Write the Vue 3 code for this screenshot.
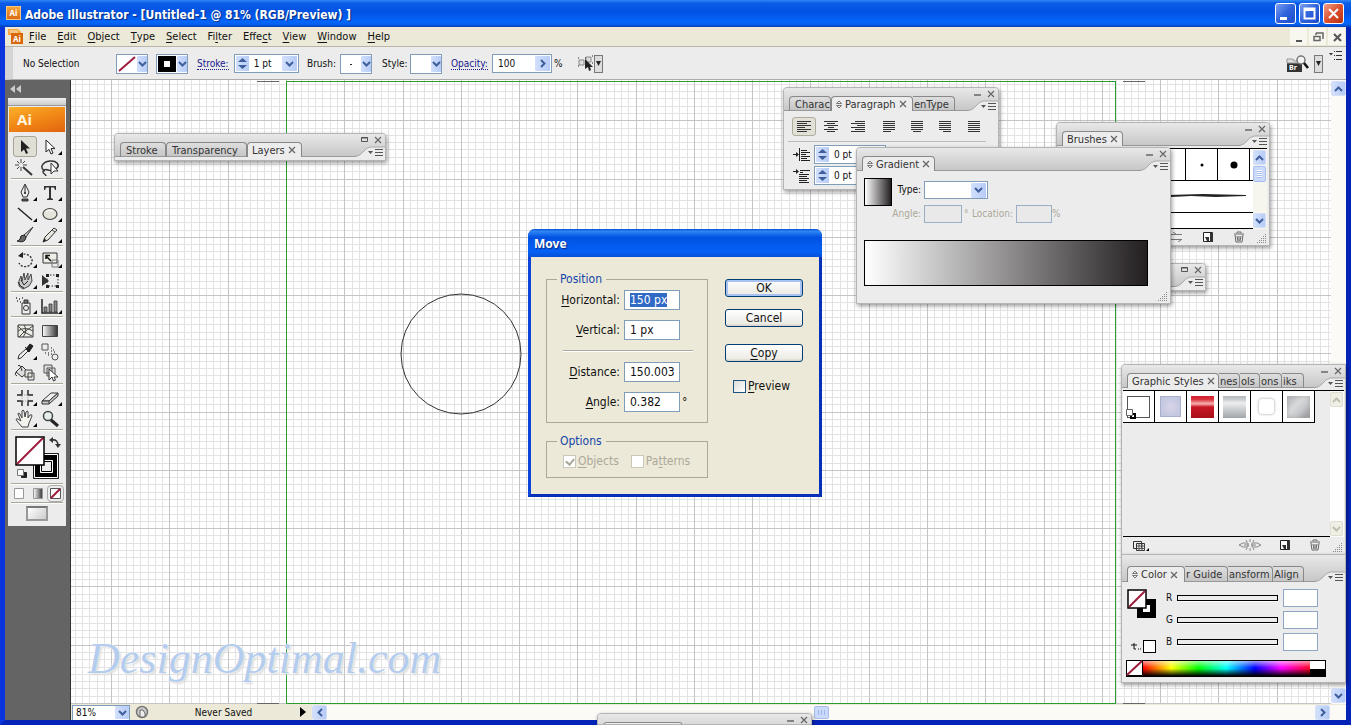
<script setup>
import { ref, onMounted } from 'vue'

const menus = [
  ['', 'F', 'ile'], ['', 'E', 'dit'], ['', 'O', 'bject'], ['', 'T', 'ype'], ['', 'S', 'elect'],
  ['Fi', 'l', 'ter'], ['Effe', 'c', 't'], ['', 'V', 'iew'], ['', 'W', 'indow'], ['', 'H', 'elp']
]

const arrow = 'M8 3v12l3-2.6 2 4.6 2-1-2-4.4h4z'
const toolGroups = [
  [
    { name: 'Selection', active: true, svg: `<path d="${arrow}" fill="#222"/>` },
    { name: 'Direct Selection', sub: true, svg: `<path d="${arrow}" fill="#fff" stroke="#222"/>` },
    { name: 'Magic Wand', svg: '<path d="M10 9l9 8" stroke="#333" stroke-width="2"/><path d="M8 1v4M8 9v4M2 7h4M10 7h4M4 3l2.500 2.500M12 3L9.500 5.500M4 11l2.500-2.500" stroke="#444"/>' },
    { name: 'Lasso', svg: '<path d="M7 13C1 10 4 4 12 3c7-.500 10 4 7 7-2 2-6 3-9 2-3-1-5 0-5 2s3 2 3 4" fill="none" stroke="#333" stroke-width="1.500"/><path d="M13 5v11l3-3h4z" fill="#fff" stroke="#333"/>' }
  ],
  [
    { name: 'Pen', sub: true, svg: '<path d="M12 1l4 8-2 5h-4L8 9z" fill="#eee" stroke="#333"/><path d="M12 2v8M9 16h6v2H9z" stroke="#333" fill="#555"/><circle cx="12" cy="10" r="1" fill="#222"/>' },
    { name: 'Type', sub: true, svg: '<path d="M6 3h12v4h-1l-1-2.500h-3V15l2 1v1H9v-1l2-1V4.500H8L7 7H6z" fill="#333"/>' },
    { name: 'Line Segment', sub: true, svg: '<path d="M5 4l14 12" stroke="#222" stroke-width="1.500"/>' },
    { name: 'Ellipse', sub: true, svg: '<ellipse cx="12" cy="10" rx="7" ry="5.500" fill="#e4e4da" stroke="#444" stroke-width="1.200"/><path d="M8 8q3-3 7-1" stroke="#fff" fill="none"/>' },
    { name: 'Paintbrush', svg: '<path d="M20 2l-9 8 2 2z" fill="#ccc" stroke="#333"/><path d="M11 10q-4 0-4 4-1 2-3 2 6 2 8-1 1-2 1-3z" fill="#666" stroke="#222"/>' },
    { name: 'Pencil', sub: true, svg: '<path d="M5 17l2-5 9-9 3 2-9 10z" fill="#e8e8e0" stroke="#333"/><path d="M5 17l1.500-3.500 2 1.800z" fill="#222"/><path d="M14 5l3 2" stroke="#444"/>' }
  ],
  [
    { name: 'Rotate', sub: true, svg: '<path d="M7 5c7-3 13 2 12 7-2 6-11 6-13 1" fill="none" stroke="#333" stroke-width="1.400" stroke-dasharray="2 1.500"/><path d="M5 6l5-4v6z" fill="#222"/>' },
    { name: 'Scale', sub: true, svg: '<path d="M5 3h14v10H5z" fill="#eeeee6" stroke="#333"/><path d="M14 10h6v7h-6z" fill="none" stroke="#777"/><path d="M8 6l5 5M8 9V5.500h4" stroke="#111" stroke-width="1.500" fill="none"/>' },
    { name: 'Warp', sub: true, svg: '<path d="M6 10l2-5 1 5 2-8 1 7 3-7v7l3-6 1 7-3 5-6 3-4-3z" fill="#ccc" stroke="#444"/><path d="M5 11q2 5 6 6M8 9l3 5 4-4" fill="none" stroke="#222"/>' },
    { name: 'Free Transform', svg: '<path d="M9 4h11v11H9z" fill="none" stroke="#333" stroke-dasharray="1.500 1.500"/><path d="M8 3h3v3H8zM18 3h3v3h-3zM8 14h3v3H8zM18 14h3v3h-3z" fill="#222"/><path d="M4 4v11l7-5z" fill="#333"/>' }
  ],
  [
    { name: 'Symbol Sprayer', sub: true, svg: '<path d="M9 7h8v11H9z" fill="#eee" stroke="#333"/><path d="M11 4h4v3h-4z" fill="#777" stroke="#333"/><circle cx="13" cy="12" r="2.500" fill="none" stroke="#333"/><path d="M3 2h1M6 3h1M9 2h1M4 5h1M7 6h1" stroke="#333" stroke-width="1.500"/>' },
    { name: 'Column Graph', sub: true, svg: '<path d="M4 3v14h16" fill="none" stroke="#222" stroke-width="1.500"/><path d="M6 11h3v5H6zM11 8h3v8h-3zM16 5h3v11h-3z" fill="#888" stroke="#333" stroke-width=".800"/>' }
  ],
  [
    { name: 'Mesh', svg: '<path d="M5 4h15v12H5z" fill="#eeeee6" stroke="#333"/><path d="M5 10q7-5 15 0M11 4q4 6-1 12M5 5l6 6 9-6M6 16l5-5 8 4" fill="none" stroke="#444"/>' },
    { name: 'Gradient', svg: '<defs><linearGradient id="toolramp"><stop stop-color="#fff"/><stop offset="1" stop-color="#333"/></linearGradient></defs><path d="M4.500 4.500h15v11h-15z" fill="url(#toolramp)" stroke="#444"/>' },
    { name: 'Eyedropper', sub: true, svg: '<path d="M5 17l1-4 7-6 2 2-7 7z" fill="#eee" stroke="#333"/><path d="M12 5l5 5M13 7l4-5 3 2-4 6z" fill="#222" stroke="#222"/>' },
    { name: 'Blend', svg: '<path d="M4 2h6v6H4z" fill="#eee" stroke="#555"/><circle cx="17" cy="15" r="3" fill="#eee" stroke="#555"/><path d="M7 11h1M10 11h1M13 6h1M13 9h1M15 8h1M10 13h1M13 12h1M16 10h1" stroke="#555" stroke-width="1.300"/>' },
    { name: 'Live Paint Bucket', svg: '<path d="M3 9l6-6 6 6-6 5z" fill="#ddd" stroke="#333"/><path d="M5 3q2-3 4 5M3 9q-2 3 1 4" fill="none" stroke="#333"/><path d="M12 7h7v7h-7zM15 10h6v7h-6z" fill="#e4e4dc" stroke="#444"/>' },
    { name: 'Live Paint Selection', svg: '<path d="M6 2h8v8H6zM9 5h8v8H9z" fill="#ddd" stroke="#555"/><path d="M11 6v11l3-3 1.500 4 2-1-1.500-3h4z" fill="#fff" stroke="#333"/>' }
  ],
  [
    { name: 'Crop Area', sub: true, svg: '<path d="M9 2v5H4M15 2v5h5M9 18v-5H4M15 18v-5h5" fill="none" stroke="#222" stroke-width="1.400"/><path d="M9 7h6v6H9z" fill="none" stroke="#999" stroke-dasharray="1 1"/>' },
    { name: 'Eraser', sub: true, svg: '<path d="M4 13l9-8h7l-9 8z" fill="#eee" stroke="#333"/><path d="M4 13v3h7l9-8V5l-9 8H4M11 13v3" fill="#ccc" stroke="#333"/>' },
    { name: 'Hand', sub: true, svg: '<path d="M9 18l-5-6q-2-3 1-2l3 2L5 5q0-2 2 0l2 4V2q1-2 2 0l1 6 1-5q2-2 2 0v6l2-3q2-1 2 1l-3 7-1 4z" fill="#f4f4ee" stroke="#444"/>' },
    { name: 'Zoom', svg: '<circle cx="10" cy="7" r="4.500" fill="#e8eef0" stroke="#444" stroke-width="1.500"/><path d="M13 11l7 6" stroke="#222" stroke-width="3"/>' }
  ]
]

const panels = [
  { id: 'layers', min: 'box', tabs: [{ t: 'Stroke', w: 46 }, { t: 'Transparency', w: 81 }, { t: 'Layers', w: 55, on: true }] },
  { id: 'paragraph', min: 'dash', tabs: [{ t: 'Charac', w: 42 }, { t: 'Paragraph', w: 82, on: true, cycle: true }, { t: 'enType', w: 42, cut: true }] },
  { id: 'brushes', min: 'dash', tabs: [{ t: 'Brushes', w: 61, on: true }] },
  { id: 'spare', min: 'box', tabs: [] },
  { id: 'gradient', min: 'dash', tabs: [{ t: 'Gradient', w: 73, on: true, cycle: true }] },
  { id: 'styles', min: 'dash', tabs: [{ t: 'Graphic Styles', w: 92, on: true }, { t: 'nes', w: 21, cut: true }, { t: 'ols', w: 20, cut: true }, { t: 'ons', w: 22, cut: true }, { t: 'iks', w: 22, cut: true }] },
  { id: 'color', min: '', tabs: [{ t: 'Color', w: 58, on: true, cycle: true }, { t: 'r Guide', w: 43, cut: true }, { t: 'ansform', w: 45, cut: true }, { t: 'Align', w: 31, cut: true }] },
  { id: 'docked', min: 'dash', tabs: [{ t: '', w: 80, on: true, blank: true }] }
]

const alignIcons = [
  ['left', [14, 10, 14, 8, 14, 10], 0], ['center', [14, 8, 14, 6, 14, 8], 1], ['right', [10, 14, 8, 14, 10, 14], 2],
  ['justify left', [12, 12, 12, 12, 12, 8], 0], ['justify center', [12, 12, 12, 12, 12, 8], 1],
  ['justify right', [12, 12, 12, 12, 12, 8], 2], ['justify all', [12, 12, 12, 12, 12, 12], 0]
].map(([name, ws, mode]) => ({
  name,
  d: ws.map((w, i) => `M${mode === 0 ? 1 : mode === 1 ? 1 + (14 - w) / 2 : 15 - w} ${i * 2 + 2}.5h${w}`).join('')
}))

const sliders = ['R', 'G', 'B']
const swatches = ['default', 'lilac', 'red', 'steel', 'soft', 'bevel']

function gridPath(origin, limit, step, vertical, len) {
  let d = ''
  const start = origin - Math.ceil(origin / step) * step
  for (let p = start; p < limit; p += step) {
    const at = Math.round(p) + 0.5
    d += vertical ? `M${at} 0V${len}` : `M0 ${at}H${len}`
  }
  return d
}
const major = 58.27
const minor = major / 8
const gridMinor = gridPath(215, 2400, minor, true, 1500) + gridPath(623, 1500, minor, false, 2400)
const gridMajor = gridPath(215, 2400, major, true, 1500) + gridPath(623, 1500, major, false, 2400)

const horizontal = ref('150 px')
const firstField = ref(null)
onMounted(() => {
  firstField.value.focus({ preventScroll: true })
  firstField.value.select()
})
</script>

<template>
  <div class="window">
    <header class="titlebar">
      <span class="app-icon">Ai</span>
      <h1>Adobe Illustrator - [Untitled-1 @ 81% (RGB/Preview) ]</h1>
      <button class="win-btn" aria-label="Minimize"><svg width="19" height="19"><path d="M4 13h7v3H4z" fill="#fff" /></svg></button>
      <button class="win-btn" aria-label="Maximize"><svg width="19" height="19"><path d="M4.500 4.500h10v10h-10zM4 6h11" fill="none" stroke="#fff" stroke-width="2" /></svg></button>
      <button class="win-btn close" aria-label="Close"><svg width="19" height="19"><path d="M5 5l9 9M14 5l-9 9" stroke="#fff" stroke-width="2" /></svg></button>
    </header>

    <nav class="menubar">
      <svg class="doc-icon" width="16" height="17"><path d="M0 1h10l3 3v12H3V7H0z" fill="#f6a53c" /><path d="M3 5h12v11H3z" fill="#d9670c" /><path d="M1 2h9v3H2z" fill="#f8c684" /><text x="5" y="14" fill="#fff" font-size="8" font-weight="bold" font-family="Noto Sans, sans-serif">Ai</text></svg>
      <button v-for="m in menus" :key="m.join('')" class="menu">{{ m[0] }}<u>{{ m[1] }}</u>{{ m[2] }}</button>
      <span class="grow"></span>
      <button class="doc-btn" aria-label="Minimize document"><svg width="16" height="16"><path d="M5 11h6v2H5z" fill="#555" /></svg></button>
      <button class="doc-btn" aria-label="Restore document"><svg width="16" height="16"><path d="M6 4h7v6M6 4v2M4 7.500h6v4H4z" fill="none" stroke="#666" stroke-width="1.500" /></svg></button>
      <button class="doc-btn" aria-label="Close document"><svg width="16" height="16"><path d="M5 5l7 7M12 5l-7 7" stroke="#555" stroke-width="2" /></svg></button>
    </nav>

    <div class="controlbar">
      <span class="lab-sel">No Selection</span>
      <button class="swatch" aria-label="Fill"><svg class="chip" width="20" height="18"><path d="M2 16L18 2" stroke="#9c1c3c" stroke-width="2" /></svg><span class="drop"><svg width="9" height="8"><path d="M1 2l3.500 3.500L8 2" /></svg></span></button>
      <button class="swatch" aria-label="Stroke colour"><svg class="chip" width="20" height="18"><path d="M1 1h18v16H1z" fill="#000" /><path d="M7 6h6v6H7z" fill="#fff" /></svg><span class="drop"><svg width="9" height="8"><path d="M1 2l3.500 3.500L8 2" /></svg></span></button>
      <label class="lab-stroke" for="weight"><a href="#stroke">Stroke:</a></label>
      <span class="combo weight">
        <button class="spin" aria-label="Step stroke"><svg width="9" height="13"><path d="M0 5l4.500-4L9 5zM0 8l4.500 4L9 8z" /></svg></button>
        <select id="weight"><option>1 pt</option></select>
        <span class="drop"><svg width="9" height="8"><path d="M1 2l3.500 3.500L8 2" /></svg></span>
      </span>
      <span class="lab-brush">Brush:</span>
      <button class="swatch" aria-label="Brush"><svg class="chip" width="20" height="18"><path d="M9 9h2v1H9z" fill="#222" /></svg><span class="drop"><svg width="9" height="8"><path d="M1 2l3.500 3.500L8 2" /></svg></span></button>
      <span class="lab-style">Style:</span>
      <button class="swatch" aria-label="Style"><svg class="chip" width="20" height="18"></svg><span class="drop"><svg width="9" height="8"><path d="M1 2l3.500 3.500L8 2" /></svg></span></button>
      <label class="lab-opacity" for="opacity"><a href="#opacity">Opacity:</a></label>
      <span class="combo opacity">
        <input id="opacity" value="100" />
        <button class="drop" aria-label="Opacity slider"><svg width="8" height="9"><path d="M2 1l3.500 3.500L2 8" /></svg></button>
      </span>
      <span class="lab-pct">%</span>
      <button class="bare" aria-label="Select similar"><svg width="16" height="17"><path d="M1 5h5v5H1zM8 2h5v5H8z" fill="#ddd" stroke="#888" /><path d="M0 3h1M7 3h1M14 1h1M0 11h1M14 8h1" stroke="#222" /><path d="M7 4v10l3-2 1 4 2-1-1-3h3z" fill="#222" /></svg></button>
      <button class="tiny-drop" aria-label="Similar options"><svg width="5" height="5"><path d="M0 0h5L2.500 5z" fill="#222" /></svg></button>
      <span class="grow"></span>
      <button class="bare" aria-label="Go to Bridge"><svg width="24" height="18"><path d="M1 4h6l1 2h8v11H1z" fill="#333" /><path d="M1 4h6l1 2h8v2H1z" fill="#ddd" stroke="#999" /><text x="3" y="15" fill="#fff" font-size="7" font-weight="bold" font-family="Noto Sans, sans-serif">Br</text><circle cx="15" cy="5" r="4" fill="#f4f4f4" stroke="#777" stroke-width="1.500" /><path d="M18 8l4 5" stroke="#111" stroke-width="2.500" /></svg></button>
      <button class="tiny-drop" aria-label="Bridge options"><svg width="5" height="5"><path d="M0 0h5L2.500 5z" fill="#222" /></svg></button>
      <button class="bare bar-menu" aria-label="Bar menu"><svg width="14" height="10"><path d="M0 3h4L2 5.500z" fill="#333" /><path d="M5 1.500h1M7 1.500h6M5 5.500h1M7 5.500h6M5 9.500h1M7 9.500h6" stroke="#333" /></svg></button>
    </div>

    <main class="workspace">
      <aside class="dock">
        <button class="collapse" aria-label="Collapse tools"><svg width="11" height="8"><path d="M5 0v8L0 4zM11 0v8L6 4z" fill="#ccc" /></svg></button>
        <div class="tools">
          <div class="handle"></div>
          <div class="logo">Ai</div>
          <div v-for="(g, gi) in toolGroups" :key="gi" class="tool-group">
            <button v-for="t in g" :key="t.name" class="tool" :class="{ active: t.active, sub: t.sub }" :aria-label="t.name">
              <svg width="24" height="20" v-html="t.svg"></svg>
            </button>
          </div>
          <div class="paint">
            <svg width="46" height="46">
              <path d="M18.500 19.500h25v25h-25z" fill="#000" stroke="#222" /><path d="M19.500 20.500h23v23h-23z" fill="none" stroke="#fff" />
              <path d="M25.500 26.500h12v12h-12z" fill="#ececec" stroke="#fff" /><path d="M26.500 27.500h10v10h-10z" fill="#ececec" stroke="#000" />
              <path d="M1 3h28v28H1z" fill="#fff" stroke="#000" stroke-width="1.500" /><path d="M2 30L28 4" stroke="#9c1c3c" stroke-width="2" />
              <path d="M37 6q6-1 6 6" fill="none" stroke="#333" stroke-width="1.500" /><path d="M34 6l4-3v6zM40 10h6l-3 4z" fill="#333" />
              <path d="M6.500 38.500h5v5h-5z" fill="#222" stroke="#222" /><path d="M2.500 35.500h6v6h-6z" fill="#fff" stroke="#777" />
            </svg>
          </div>
          <div class="modes">
            <button aria-label="Color"><svg width="15" height="13"><path d="M2.500 1.500h9v10h-9z" fill="#fff" stroke="#999" /></svg></button>
            <button aria-label="Gradient fill"><svg width="15" height="13"><path d="M3.500 1.500h9v10h-9z" fill="url(#toolramp)" stroke="#999" /></svg></button>
            <button class="active" aria-label="None"><svg width="15" height="13"><path d="M2.500 1.500h10v10h-10z" fill="#fff" stroke="#555" /><path d="M3 11l9-9" stroke="#9c1c3c" stroke-width="2" /></svg></button>
          </div>
          <div class="screen"><button aria-label="Screen mode"></button></div>
        </div>
      </aside>

      <section class="document">
        <div class="canvas-row">
          <div class="canvas">
            <svg class="art" width="100%" height="100%">
              <path :d="gridMinor" stroke="#e3e3e3" shape-rendering="crispEdges" />
              <path :d="gridMajor" stroke="#c4c4c4" shape-rendering="crispEdges" />
              <rect x="215" y="1" width="830" height="1" fill="#2a9c30" />
              <rect x="215" y="623" width="830" height="1" fill="#2a9c30" />
              <rect x="215" y="1" width="1" height="623" fill="#2a9c30" />
              <rect x="1044" y="1" width="1" height="623" fill="#2a9c30" />
              <path d="M186 1.500h22M1052 1.500h22M186 623.500h22M1052 623.500h22" stroke="#666" />
              <circle cx="390" cy="274" r="60" fill="none" stroke="#333" />
            </svg>
            <div class="watermark">DesignOptimal.com</div>
          </div>
          <div class="vscroll">
            <button class="sb" aria-label="Scroll up"><svg width="9" height="8"><path d="M1 6l3.500-3.500L8 6" /></svg></button>
            <span class="grow"></span>
            <button class="sb" aria-label="Scroll down"><svg width="9" height="8"><path d="M1 2l3.500 3.500L8 2" /></svg></button>
          </div>
        </div>
        <footer class="status">
          <span class="zoom"><select aria-label="Zoom level"><option>81%</option></select><span class="drop"><svg width="9" height="8"><path d="M1 2l3.500 3.500L8 2" /></svg></span></span>
          <svg class="cue" width="14" height="14"><circle cx="7" cy="7" r="5.500" fill="#ccc" stroke="#777" stroke-width="1.500" /><path d="M5 12V5h3l2 3v4z" fill="#eee" stroke="#666" /></svg>
          <span class="saved">Never Saved</span>
          <button class="bare play" aria-label="Status menu"><svg width="6" height="10"><path d="M0 0v10l6-5z" fill="#000" /></svg></button>
          <div class="hscroll">
            <button class="sb" aria-label="Scroll left"><svg width="8" height="9"><path d="M6 1L2.500 4.500 6 8" /></svg></button>
            <span class="grow"></span>
            <span class="thumb"></span>
            <span class="grow"></span>
            <button class="sb" aria-label="Scroll right"><svg width="8" height="9"><path d="M2 1l3.500 3.500L2 8" /></svg></button>
          </div>
        </footer>
      </section>
    </main>

    <section v-for="p in panels" :key="p.id" class="panel" :class="p.id">
      <div class="head">
        <div class="tabs">
          <button v-for="(t, i) in p.tabs" :key="i" class="tab" :class="{ on: t.on, cut: t.cut }" :style="{ width: t.w + 'px' }">
            <svg v-if="t.cycle" width="6" height="9"><path d="M.500 3.500L3 1l2.500 2.500zM.500 5.500L3 8l2.500-2.500z" fill="none" stroke="#777" /></svg>
            <span>{{ t.t }}</span>
            <svg v-if="t.on && !t.blank" width="8" height="8"><path d="M1 1l6 6M7 1L1 7" stroke="#666" stroke-width="1.300" /></svg>
          </button>
        </div>
        <div class="corner">
          <div v-if="p.min" class="btns">
            <svg width="8" height="8"><path v-if="p.min === 'dash'" d="M0 5h7" stroke="#666" stroke-width="1.500" /><path v-else d="M.500 1.500h6v4h-6zM0 2h7" fill="none" stroke="#555" /></svg>
            <svg width="8" height="8"><path d="M1 1l6 6M7 1L1 7" stroke="#666" stroke-width="1.200" /></svg>
          </div>
          <svg class="flyout" width="30" height="12"><path d="M0 12Q5 11 8 7t7-5h15v10z" fill="#ececec" /><path d="M0 11.500Q5 11 8 7t7-5h15" fill="none" stroke="#aaa" /><path d="M13 6h5l-2.500 3z" fill="#555" /><path d="M20 4.500h8M20 7.500h8M20 10.500h8" stroke="#555" /></svg>
        </div>
      </div>

      <div v-if="p.id === 'paragraph'" class="body">
        <div class="aligns">
          <button v-for="(a, i) in alignIcons" :key="a.name" :class="{ active: i === 0 }" :aria-label="a.name"><svg width="16" height="15"><path :d="a.d" stroke="#333" /></svg></button>
        </div>
        <div v-for="n in 2" :key="n" class="indent">
          <svg width="18" height="14"><path v-if="n === 1" d="M0 6.500h5M6.500 0v13M8 2.500h6M8 4.500h9M8 6.500h5M8 8.500h9M8 10.500h6M8 12.500h9" stroke="#222" /><path v-else d="M0 2.500h5M7 1.500h10M7 3.500h3M6 5.500h10M6 7.500h8M6 9.500h10M6 11.500h8M6 13.500h10" stroke="#222" /><path :d="n === 1 ? 'M3 4l3 2.500L3 9z' : 'M3 0l3 2.500L3 5z'" fill="#222" /></svg>
          <span class="combo">
            <button class="spin" aria-label="Step"><svg width="9" height="13"><path d="M0 5l4.500-4L9 5zM0 8l4.500 4L9 8z" /></svg></button>
            <input :aria-label="n === 1 ? 'Left indent' : 'First-line indent'" value="0 pt" />
          </span>
        </div>
      </div>

      <div v-else-if="p.id === 'brushes'" class="body">
        <div class="brush-area">
          <div class="brush-list">
            <div class="dots">
              <span v-for="n in 6" :key="n"><svg width="31" height="31"><circle v-if="n > 4" cx="16" cy="16" :r="n === 5 ? 1.5 : 3.500" fill="#000" /></svg></span>
            </div>
            <div class="charcoal"><svg width="192" height="31"><path d="M20 14l40-1 50 1 35-1 43 1v1l-30 1-25-1-40 2-50-1z" fill="#222" /></svg></div>
            <div class="next"></div>
          </div>
          <div class="mini-scroll">
            <button class="sb" aria-label="Up"><svg width="9" height="8"><path d="M1 6l3.500-3.500L8 6" /></svg></button>
            <span class="thumb"></span>
            <span class="grow"></span>
            <button class="sb" aria-label="Down"><svg width="9" height="8"><path d="M1 2l3.500 3.500L8 2" /></svg></button>
          </div>
        </div>
        <div class="foot">
          <svg width="13" height="10"><path d="M0 2.500h12M0 7.500h12M3 0l3 2M8 10l3-2" stroke="#777" /></svg>
          <svg width="12" height="12"><path d="M1.500 1.500h9v9h-9z" fill="#fff" stroke="#222" /><path d="M3 6h4v4H5zM8 2h3v9H8z" fill="#333" /></svg>
          <svg width="12" height="12"><path d="M1 3h10M4 2V1h4v1M2 4l1 7h6l1-7M4 5l1 5M6 5v5M8 5l-1 5" fill="none" stroke="#666" /></svg>
        </div>
      </div>

      <div v-else-if="p.id === 'gradient'" class="body">
        <div class="grad-top">
          <div class="grad-thumb"></div>
          <div class="grad-fields">
            <div class="line"><label for="gtype" class="on">Type:</label><span class="combo gsel"><select id="gtype"><option></option></select><span class="drop"><svg width="9" height="8"><path d="M1 2l3.500 3.500L8 2" /></svg></span></span></div>
            <div class="line"><label for="gangle">Angle:</label><input id="gangle" class="gangle" disabled /><span class="deg">°</span><label for="gloc" class="loc">Location:</label><input id="gloc" class="gloc" disabled /><span>%</span></div>
          </div>
        </div>
        <div class="grad-bar"></div>
      </div>

      <div v-else-if="p.id === 'styles'" class="body">
        <div class="style-area">
          <div class="style-list">
            <button v-for="s in swatches" :key="s" :aria-label="s + ' style'"><span :class="s"></span><svg v-if="s === 'default'" width="10" height="10"><path d="M5 5h4v4H5z" fill="#fff" stroke="#000" stroke-width="2" /><path d="M.500.500h6v6h-6z" fill="#fff" stroke="#666" /></svg></button>
          </div>
          <div class="mini-scroll off">
            <button class="sb" aria-label="Up"><svg width="9" height="8"><path d="M1 6l3.500-3.500L8 6" /></svg></button>
            <span class="grow"></span>
            <button class="sb" aria-label="Down"><svg width="9" height="8"><path d="M1 2l3.500 3.500L8 2" /></svg></button>
          </div>
        </div>
        <div class="foot">
          <svg width="18" height="13"><path d="M1.500 2.500h8v7h-8zM4.500 4.500h8v7h-8z" fill="#eee" stroke="#333" /><path d="M5 7h8M5 9.500h8M7 5v7M10 5v7" stroke="#555" /><path d="M17 9v3h-3z" fill="#000" /></svg>
          <span class="grow"></span>
          <svg width="22" height="12"><path d="M0 6l4-2h5v4H4zM22 6l-4-2h-5v4h5zM5 6h5M12 6h5M11 0v3M11 9v3M7 1l1 2M15 1l-1 2M7 11l1-2M15 11l-1-2" fill="none" stroke="#888" /></svg>
          <svg class="new" width="12" height="12"><path d="M1.500 1.500h9v9h-9z" fill="#fff" stroke="#222" /><path d="M3 6h4v4H5zM8 2h3v9H8z" fill="#333" /></svg>
          <svg width="12" height="12"><path d="M1 3h10M4 2V1h4v1M2 4l1 7h6l1-7M4 5l1 5M6 5v5M8 5l-1 5" fill="none" stroke="#666" /></svg>
        </div>
      </div>

      <div v-else-if="p.id === 'color'" class="body">
        <div class="color-top">
          <div class="color-chips">
            <svg width="30" height="30"><path d="M10 10h19v19H10z" fill="#000" /><path d="M16 16h7v7h-7z" fill="#fff" /><path d="M1 1h18v18H1z" fill="#fff" stroke="#000" stroke-width="1.500" /><path d="M2 18L18 2" stroke="#9c1c3c" stroke-width="2" /></svg>
            <div class="web"><svg width="10" height="9"><path d="M3 1v6h2M0 3h6M7 7h1M9 7h1" fill="none" stroke="#111" /></svg><span></span></div>
          </div>
          <div class="rgb">
            <div v-for="c in sliders" :key="c" class="channel"><label :for="'ch' + c">{{ c }}</label><span class="slot"></span><input :id="'ch' + c" /></div>
          </div>
        </div>
        <div class="spectrum"><svg width="17" height="17"><path d="M.500.500h16v15h-16z" fill="#fff" stroke="#000" /><path d="M1 15L16 1" stroke="#9c1c3c" stroke-width="2" /></svg><span class="hues"></span><span class="bw"></span></div>
      </div>
      <svg v-if="['brushes', 'gradient', 'styles'].includes(p.id)" class="grip" width="10" height="10"><path d="M0 9.500h10M2 7.500h8M4 5.500h6M6 3.500h4M8 1.500h2" stroke="#888" stroke-dasharray="1 1" /></svg>
    </section>

    <div class="dialog" role="dialog" aria-label="Move">
      <div class="dlg-title">Move</div>
      <form class="dlg-body" @submit.prevent>
        <div class="dlg-left">
          <fieldset>
            <legend>Position</legend>
            <div class="field"><label for="hz"><u>H</u>orizontal:</label><input id="hz" ref="firstField" v-model="horizontal" /></div>
            <div class="field"><label for="vt"><u>V</u>ertical:</label><input id="vt" value="1 px" /></div>
            <hr />
            <div class="field"><label for="ds"><u>D</u>istance:</label><input id="ds" value="150.003" /></div>
            <div class="field"><label for="an"><u>A</u>ngle:</label><input id="an" value="0.382" /><span>°</span></div>
          </fieldset>
          <fieldset class="options">
            <legend>Options</legend>
            <div class="checks">
              <label><input type="checkbox" checked disabled /><span><u>O</u>bjects</span></label>
              <label><input type="checkbox" disabled /><span>Pa<u>t</u>terns</span></label>
            </div>
          </fieldset>
        </div>
        <div class="dlg-right">
          <button class="push default">OK</button>
          <button class="push" type="button">Cancel</button>
          <button class="push copy" type="button"><u>C</u>opy</button>
          <label class="preview"><input type="checkbox" /><span><u>P</u>review</span></label>
        </div>
      </form>
    </div>
  </div>
</template>

<style>
body { margin: 0; overflow: hidden; }
</style>

<style scoped>
* { box-sizing: border-box; }
.window { position: relative; display: flex; flex-direction: column; height: 100vh; border: solid #0a35dc; border-right-color: #0424b8; border-bottom-color: #0424b8; border-width: 0 5px 5px; background: #ececec; font: 11px/14px "DejaVu Sans Condensed", "DejaVu Sans", sans-serif; color: #111; }
button, input, select { font: inherit; color: inherit; margin: 0; padding: 0; border: 0; background: none; outline: 0; border-radius: 0; }
button { display: flex; align-items: center; justify-content: center; }
select { appearance: none; }
svg { display: block; flex: none; }
u { text-underline-offset: 2px; }
.grow { flex: 1; }

.titlebar { display: flex; align-items: center; gap: 3px; height: 27px; margin: 0 -5px; padding: 0 7px 0 6px; background: linear-gradient(#2f86f5, #0a5ce8 12%, #0152e2 45%, #0566fb 80%, #0560f0 90%, #0a3fb5); flex: none; }
.titlebar h1 { flex: 1; margin: 0; padding: 2px 0 0 1px; font: bold 12px/16px "DejaVu Sans Condensed", "DejaVu Sans", sans-serif; color: #fff; text-shadow: 1px 1px 1px #0a2a80; }
.app-icon { width: 15px; height: 14px; margin-bottom: 2px; border: 1px solid #f9c880; background: linear-gradient(#f4a53c, #d96a10); color: #fff; font: bold 8px/12px "Noto Sans", sans-serif; text-align: center; }
.win-btn { width: 21px; height: 21px; border: 1px solid #fff; border-radius: 3px; background: linear-gradient(135deg, #7ba0f0, #2f62dc 50%, #1d4cc8); }
.win-btn.close { background: linear-gradient(135deg, #f0a088, #dc5030 50%, #b83010); }

.menubar { display: flex; align-items: center; height: 20px; padding: 0 1px 0 3px; background: #ece9d8; border-bottom: 1px solid #b8b5a8; flex: none; }
.doc-icon { margin-right: 5px; }
.menu { height: 18px; margin-right: 11px; white-space: pre; }
.doc-btn { width: 17px; height: 17px; margin-left: 2px; background: #f7f6ef; }

.controlbar { display: flex; align-items: center; gap: 8px; height: 33px; padding: 1px 3px 0 0; border-left: 8px solid #d4d4d4; border-bottom: 1px solid #aaa; background: #ececec; flex: none; white-space: nowrap; }
.lab-sel { width: 93px; margin: 0 -8px 0 10px; font-size: 10px; }
.swatch { width: 32px; height: 20px; justify-content: flex-start; border: 1px solid #7f9db9; background: #fff; }
.drop { display: flex; flex: none; align-items: center; justify-content: center; width: 10px; height: 16px; margin-left: auto; border-radius: 1px; background: linear-gradient(90deg, #d2e0fc, #b6cbf6); }
.drop svg path, .sb svg path { fill: none; stroke: #3f5f9c; stroke-width: 2; }
.controlbar label, .lab-brush, .lab-style { margin-right: -8px; font-size: 10px; }
.controlbar a { color: #1a1a8c; text-decoration: none; border-bottom: 1px dotted #1a1a8c; }
.controlbar label { width: 38px; padding-left: 1px; }
.combo { display: flex; align-items: center; height: 19px; border: 1px solid #7f9db9; background: #fff; font-size: 10px; }
.combo .drop { width: 15px; height: 15px; margin-right: 1px; }
.spin { width: 13px; height: 15px; margin-left: 1px; background: linear-gradient(90deg, #d2e0fc, #b6cbf6); }
.spin path { fill: #3f5f9c; }
.weight { width: 65px; }
.weight select { width: 34px; padding-left: 5px; }
.lab-brush { width: 33px; }
.lab-style { width: 30px; padding-left: 2px; }
.controlbar label.lab-opacity { width: 42px; }
.opacity { width: 60px; }
.opacity input { width: 40px; padding-left: 5px; }
.lab-pct { width: 16px; margin-left: -6px; font-size: 10px; }
.tiny-drop { width: 9px; height: 18px; margin-left: -8px; border: 1px solid #777; background: #ddd; }
.grow + .bare + .tiny-drop { margin-left: -4px; }
.controlbar .bar-menu { align-self: flex-start; margin-left: -2px; padding-top: 2px; }

.workspace { display: flex; flex: 1; min-height: 0; }
.dock { width: 66px; flex: none; padding: 0 4px 0 3px; background: #646464; border-right: 1px solid #333; }
.collapse { height: 18px; padding-left: 2px; }
.tools { background: #ececec; }
.handle { height: 8px; border-bottom: 1px solid #999; background: linear-gradient(#eee, #ccc); border-radius: 3px 3px 0 0; }
.logo { height: 25px; margin: 1px 1px 4px; padding-left: 8px; background: linear-gradient(165deg, #fbb12a, #f08414 55%, #df6410); color: #fff4dc; font: bold 15px/24px "Noto Sans", sans-serif; }
.tool-group { display: grid; grid-template-columns: 25px 25px; padding-left: 5px; margin-bottom: 4px; position: relative; }
.tool-group::after, .paint::after, .modes::after { content: ""; position: absolute; left: 3px; right: 3px; bottom: -2px; border-top: 1px solid #aca899; border-bottom: 1px solid #fff; }
.tool { position: relative; width: 24px; height: 21px; }
.tool.active { border: 1px solid #a8a594; border-radius: 3px; background: #e0dfd6; }
.tool.sub::after { content: ""; position: absolute; right: 0; bottom: 2px; border: 2px solid transparent; border-right-color: #000; border-bottom-color: #000; }
.paint { position: relative; height: 50px; padding: 1px 0 0 7px; }
.modes { position: relative; display: flex; gap: 3px; height: 18px; align-items: center; padding-left: 4px; margin-top: 1px; }
.modes button { width: 15px; height: 15px; }
.modes .active { border-radius: 3px; outline: 1px solid #aaa; }
.screen { display: flex; justify-content: center; padding: 4px 0 5px; }
.screen button { width: 22px; height: 15px; border: 2px solid #999; border-top-color: #777; background: linear-gradient(135deg, #fff, #ccc); }

.document { display: flex; flex: 1; flex-direction: column; min-width: 0; }
.canvas-row { display: flex; flex: 1; min-height: 0; }
.canvas { position: relative; flex: 1; background: #fff; overflow: hidden; min-width: 0; }
.art { position: absolute; inset: 0; }
.watermark { position: absolute; left: 17px; bottom: 16px; font: italic 44px/58px "Liberation Serif", serif; color: #b4cdee; text-shadow: 0 0 2px #fff, 2px 2px 2px #ddd; }
.vscroll { display: flex; flex-direction: column; width: 15px; padding: 1px 0; background: #fbfaf6; }
.sb { width: 15px; height: 15px; border: 1px solid #d4dff6; border-radius: 2px; background: linear-gradient(90deg, #d2e0fc, #b6cbf6); flex: none; }
.status { display: flex; align-items: center; height: 16px; padding-left: 1px; background: #ece9d8; flex: none; font-size: 10px; }
.zoom { display: flex; align-items: center; width: 58px; height: 15px; border: 1px solid #7f9db9; border-bottom: 0; background: #fff; }
.zoom select { width: 40px; padding-left: 3px; }
.zoom .drop { width: 14px; height: 13px; }
.cue { margin-left: 5px; }
.saved { width: 149px; padding-top: 2px; text-align: center; }
.play { margin-left: 2px; }
.hscroll { display: flex; flex: 1; align-items: center; margin-left: 6px; padding-right: 16px; background: #fbfaf6; }
.thumb { width: 15px; height: 13px; border: 1px solid #a8bfee; border-radius: 2px; background: repeating-linear-gradient(90deg, #9bb6ee 0 1px, #cbdafb 1px 3px) content-box, #cbdafb; padding: 3px; }

.panel { position: absolute; display: flex; flex-direction: column; background: #ececec; border: 1px solid #b4b4b4; border-radius: 4px 4px 0 0; box-shadow: 1px 2px 4px #0006; overflow: hidden; }
.layers { left: 109px; top: 133px; width: 272px; height: 28px; }
.paragraph { left: 778px; top: 87px; width: 216px; height: 103px; }
.brushes { left: 1051px; top: 122px; width: 214px; height: 124px; }
.spare { left: 1051px; top: 263px; width: 150px; height: 28px; }
.gradient { left: 851px; top: 147px; width: 315px; height: 157px; }
.styles { right: 0; top: 364px; width: 225px; height: 191px; border-radius: 4px 0 0 0; }
.color { right: 0; top: 554px; width: 225px; height: 129px; border-radius: 0; }
.docked { left: 592px; bottom: -5px; width: 215px; height: 12px; }
.head { display: flex; justify-content: space-between; height: 23px; flex: none; padding-left: 5px; background: linear-gradient(#e8e8e8, #c6c6c6); box-shadow: inset 0 -1px #999; }
.tabs { display: flex; padding-top: 8px; }
.tab { height: 15px; gap: 4px; padding: 0 5px; overflow: hidden; border: 1px solid #888; border-bottom: 0; border-radius: 4px 4px 0 0; background: linear-gradient(#dedede, #c4c4c4); box-shadow: inset 0 -1px #999; color: #333; font-size: 11px; line-height: 13px; justify-content: flex-start; white-space: nowrap; }
.tab.on { gap: 3px; padding: 0 4px; background: #ececec; box-shadow: none; }
.tab.cut { border-left: 0; border-top-left-radius: 0; padding: 0 0 0 1px; }
.corner { display: flex; flex-direction: column; align-items: flex-end; justify-content: space-between; }
.btns { display: flex; gap: 5px; padding: 2px 3px 0 0; }
.color .corner { justify-content: flex-end; }
.color .head { height: 27px; }
.color .tabs { padding-top: 11px; }
.color .tab { height: 16px; }
.grip { position: absolute; right: 2px; bottom: 2px; }

.aligns { display: grid; grid-template-columns: 27px 27px 32px 27px 27px 31px 24px; height: 31px; margin: 0 12px 3px 4px; padding: 6px 0 0 4px; border-bottom: 1px solid #bbb; }
.aligns button { width: 24px; height: 19px; }
.aligns .active { border: 1px solid #b0ad9c; border-radius: 3px; background: #e2e1d8; }
.indent { display: flex; gap: 3px; height: 19px; margin-bottom: 2px; padding-left: 9px; align-items: center; }
.indent .combo { width: 72px; }
.indent input { width: 50px; padding-left: 5px; }

.brushes .body { display: flex; flex: 1; flex-direction: column; padding: 2px 2px 0 1px; }
.brush-area { display: flex; height: 81px; border-top: 1px solid #000; }
.brush-list { display: flex; flex-direction: column; width: 195px; background: #fff; border-bottom: 1px solid #000; }
.dots { display: flex; border-bottom: 1px solid #000; height: 32px; }
.dots span { width: 32px; border-right: 1px solid #000; }
.charcoal { height: 32px; border-bottom: 1px solid #000; }
.mini-scroll { display: flex; flex-direction: column; width: 14px; margin-left: auto; padding: 1px 0; gap: 1px; background: #f6f5ee; }
.mini-scroll .sb { width: 13px; }
.mini-scroll .thumb { width: 13px; height: 16px; background: repeating-linear-gradient(#fff 0 1px, #a8bff0 1px 2px) content-box, #cbdafb; }
.mini-scroll.off { background: #fefefe; }
.mini-scroll.off .sb { border-color: #e0ded0; background: #f0efe6; }
.mini-scroll.off .sb svg path { stroke: #c0bfb0; }
.brushes .foot { display: flex; align-items: center; gap: 19px; height: 16px; padding-left: 112px; }

.gradient .body { padding: 7px 22px 0 7px; }
.grad-top { display: flex; height: 62px; }
.grad-thumb { width: 28px; height: 28px; border: 1px solid #000; background: linear-gradient(90deg, #fff, #231f20); }
.grad-fields { display: flex; flex-direction: column; gap: 6px; padding-top: 3px; }
.line { display: flex; align-items: center; height: 18px; font-size: 10px; color: #aca899; }
.line label { width: 32px; padding-right: 3px; text-align: right; }
.line label.on { color: #111; }
.line .gsel { width: 64px; height: 18px; }
.gsel select { width: 44px; }
.line input { height: 18px; border: 1px solid #9aaec4; background: #e9e9e9; }
.gangle { width: 38px; }
.deg { width: 8px; padding-left: 2px; }
.line .loc { width: 46px; white-space: nowrap; }
.gloc { width: 36px; }
.grad-bar { height: 46px; border: 1px solid #000; background: linear-gradient(90deg, #fff, #231f20); }

.styles .body { padding: 2px 1px 0 1px; }
.style-area { display: flex; height: 147px; border-top: 1px solid #000; }
.style-list { display: flex; flex: 1; align-items: flex-start; border-bottom: 1px solid #000; }
.style-list button { position: relative; width: 32px; height: 32px; border: solid #000; border-width: 0 1px 1px 0; background: #fff; }
.style-list span { width: 23px; height: 22px; }
.style-list svg { position: absolute; left: 3px; bottom: 3px; }
.default { border: 1px solid #555; }
.style-list .lilac { width: 21px; height: 21px; background: radial-gradient(#d8d4e8, #bcc4de); border: 1px solid #aab0cc; }
.red { background: linear-gradient(#d02030, #d8303a 15%, #f8b0b0 35%, #c81824 50%, #a81018); }
.steel { background: linear-gradient(#b4b8ba, #c4c8ca 12%, #eceeee 32%, #d8dadc 50%, #a0a6aa); }
.style-list .soft { width: 15px; height: 15px; border-radius: 3px; background: #fff; box-shadow: 0 0 3px #999; }
.bevel { background: linear-gradient(135deg, #b0b0b4, #d8dadc 40%, #c4c6ca 65%, #8c8c90); box-shadow: inset 0 0 4px #aaa; }
.styles .foot { display: flex; align-items: center; gap: 18px; height: 16px; padding: 0 23px 0 9px; }
.color .body { padding: 7px 20px 0 4px; }
.color-top { display: flex; }
.color-chips { width: 34px; padding-left: 1px; }
.web { display: flex; align-items: center; gap: 2px; margin-top: 21px; padding-left: 4px; }
.web span { width: 13px; height: 13px; border: 1px solid #000; background: #fff; }
.rgb { display: flex; flex-direction: column; gap: 4px; flex: 1; }
.channel { display: flex; align-items: center; height: 18px; font-size: 10px; }
.channel label { width: 17px; padding-left: 6px; }
.slot { width: 101px; height: 6px; border: 1px solid #000; box-shadow: 0 1px #fff; }
.channel input { width: 35px; height: 18px; margin-left: 5px; border: 1px solid #8fa6c4; background: #fff; }
.spectrum { display: flex; width: 200px; height: 17px; margin-top: 7px; border: 1px solid #000; }
.spectrum svg { margin: -1px 0 0 -1px; }
.hues { flex: 1; background: linear-gradient(#fff9, #fff0 45%, #0000 50%, #000), linear-gradient(90deg, #f00, #ff0 17%, #0f0 33%, #0ff 50%, #00f 67%, #f0f 83%, #f02); }
.bw { width: 15px; background: linear-gradient(#fff 50%, #000 50%); }

.dialog { position: absolute; left: 523px; top: 229px; width: 294px; border: solid #0a44d8; border-right-color: #0630b8; border-bottom-color: #0630b8; border-width: 0 3px 3px; border-radius: 7px 7px 0 0; background: #ece9d8; font-size: 12px; }
.dlg-title { height: 28px; margin: 0 -3px; padding-left: 6px; border-radius: 7px 7px 0 0; background: linear-gradient(#0a4fd0, #2f86f5 8%, #0152e2 30%, #0560f5 80%, #0450d8); color: #fff; font: bold 12px/30px "Noto Sans", sans-serif; text-shadow: 1px 1px 1px #0a2a80; }
.dlg-body { display: flex; gap: 17px; padding: 15px 15px 16px; }
fieldset { width: 162px; margin: 0; padding: 4px 10px 10px; border: 1px solid #aaa899; }
legend { height: 14px; padding: 0 4px 0 3px; color: #1446a8; }
.field { display: flex; align-items: center; height: 20px; margin-bottom: 10px; }
.field label { width: 67px; padding-right: 4px; text-align: right; white-space: nowrap; }
.field:last-child { margin-bottom: 0; }
.field input { width: 56px; height: 20px; padding: 0 5px; border: 1px solid #7f9db9; background: #fff; }
.field input::selection { background: #316ac5; color: #fff; }
.field span { padding-left: 2px; }
hr { width: 130px; height: 2px; margin: 0 0 10px 6px; border: 0; border-top: 1px solid #aca899; background: #fff; }
.options { margin-top: 11px; padding: 6px 10px 9px; }
.checks { display: flex; gap: 12px; padding-left: 6px; color: #aca899; }
.checks label, .preview { display: flex; align-items: center; gap: 2px; height: 14px; white-space: nowrap; }
.dialog input[type="checkbox"] { position: relative; appearance: none; width: 13px; height: 13px; flex: none; border: 1px solid #1d5281; background: linear-gradient(135deg, #dcdcd7, #fff); }
.dialog .checks input[type="checkbox"] { border-color: #cac8bb; background: #fff; }
.checks input:checked::after { content: ""; position: absolute; left: 3px; top: 1px; width: 4px; height: 6px; border: solid #aca899; border-width: 0 2px 2px 0; rotate: 40deg; }
.dlg-right { display: flex; flex-direction: column; width: 78px; padding-top: 7px; }
.push { width: 78px; height: 18px; margin-bottom: 12px; border: 1px solid #003c74; border-radius: 3px; background: linear-gradient(#fff, #ecebe5 85%, #d6d0c5); font-size: 12px; white-space: pre; }
.push.default { box-shadow: inset 0 0 0 2px #a9c2f4; }
.push.copy { margin: 5px 0 17px; }
.preview { padding-left: 8px; }
</style>
